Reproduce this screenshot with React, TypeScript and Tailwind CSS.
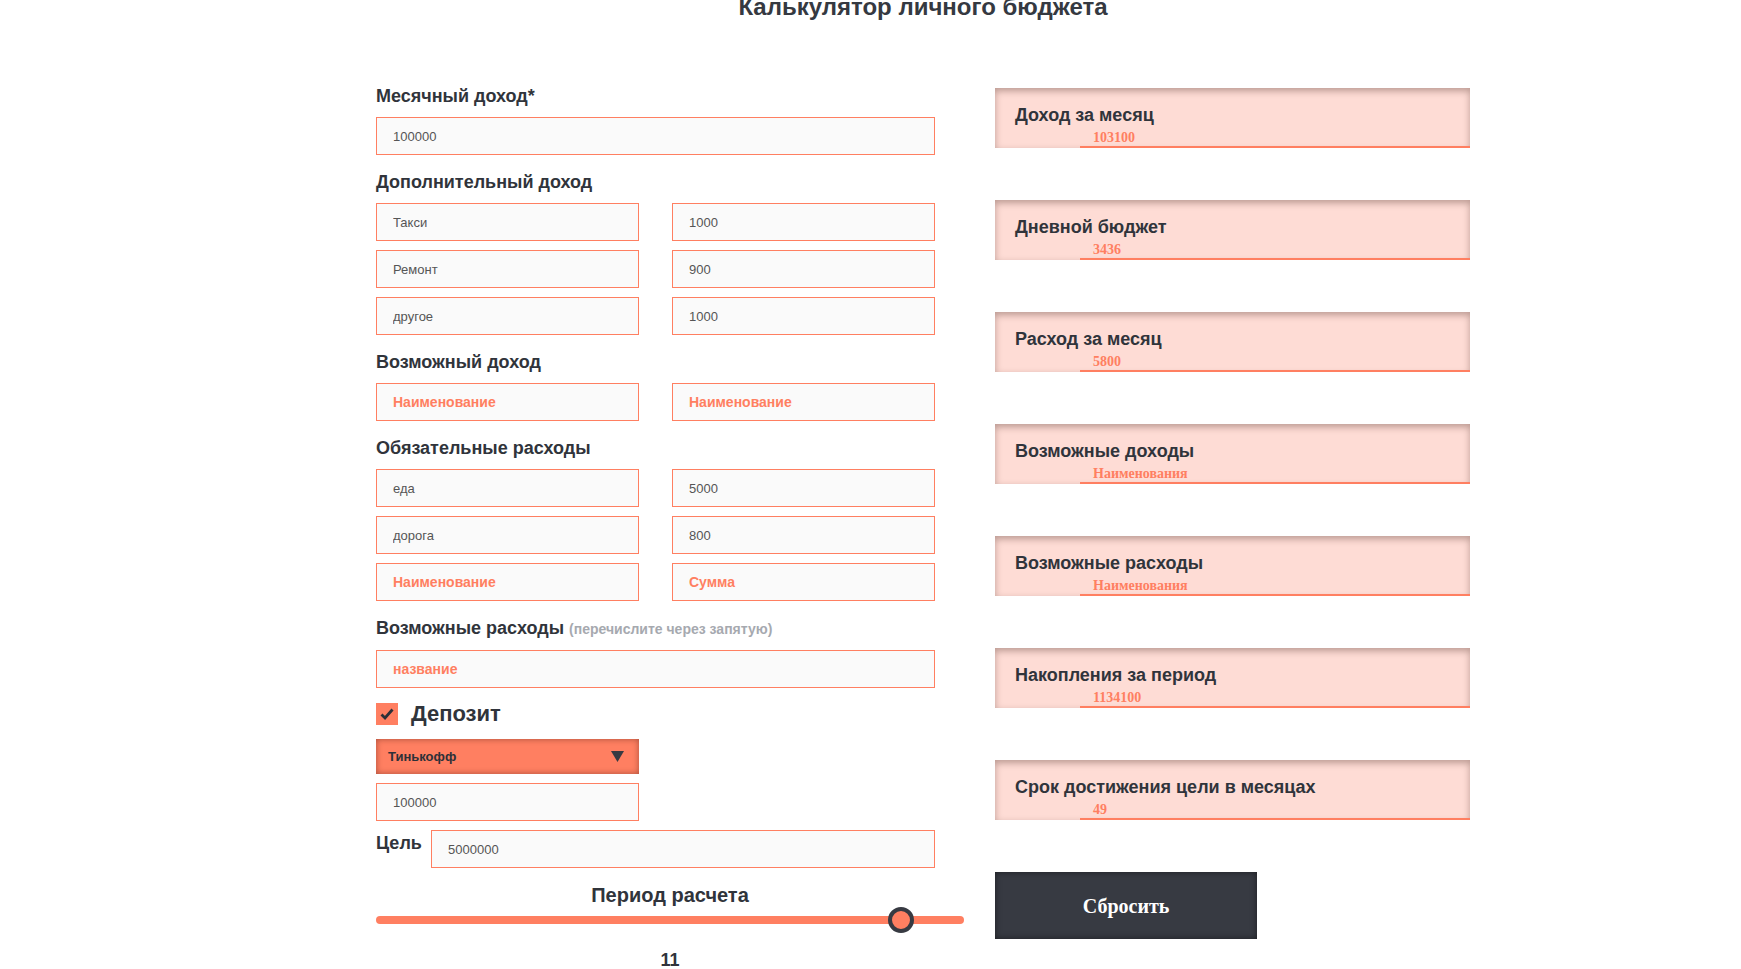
import React from 'react';

const inputCls =
  "block w-full h-[38px] border border-[#ff7f61] bg-[#fafafa] pl-[16px] pr-2 text-[13px] text-[#555] outline-none font-['Liberation_Sans',Arial,sans-serif] placeholder:text-[14px] placeholder:font-bold placeholder:text-[#ff7f61]";

function Field({ value, placeholder }: { value?: string; placeholder?: string }) {
  return <input readOnly className={inputCls} defaultValue={value} placeholder={placeholder} />;
}

function Label({ children, className = '' }: { children: React.ReactNode; className?: string }) {
  return <div className={`text-[18px] font-bold leading-[22px] text-[#30343b] ${className}`}>{children}</div>;
}

function Card({ title, value }: { title: string; value: string }) {
  return (
    <div className="h-[60px] bg-[#fedcd5] pt-[16px] shadow-[inset_0_3px_7px_rgba(60,30,20,0.35)]">
      <div className="pl-[20px] text-[18px] font-bold leading-[22px] text-[#30343b]">{title}</div>
      <div className="ml-[85px] h-[22px] border-b-2 border-[#ff7f61] pl-[13px] pt-[2px] font-['Liberation_Serif','Times_New_Roman',serif] text-[14px] font-bold leading-[20px] text-[#ff7f61]">
        {value}
      </div>
    </div>
  );
}

export default function App() {
  return (
    <div className="h-[969px] overflow-hidden bg-white font-['Liberation_Sans',Arial,sans-serif] text-[#30343b]">
      <div className="ml-[376px] flex w-[1094px] flex-col">
        <h1 className="mt-[-7px] text-center text-[24px] font-bold leading-[28px] text-[#353941]">
          Калькулятор личного бюджета
        </h1>
        <div className="mt-[64px] flex gap-[60px]">
          {/* Form column */}
          <div className="w-[559px] shrink-0">
            <Label>Месячный доход*</Label>
            <div className="mt-[10px]">
              <Field value="100000" />
            </div>

            <Label className="mt-[16px]">Дополнительный доход</Label>
            <div className="mt-[10px] grid grid-cols-2 gap-x-[33px] gap-y-[9px]">
              <Field value="Такси" />
              <Field value="1000" />
              <Field value="Ремонт" />
              <Field value="900" />
              <Field value="другое" />
              <Field value="1000" />
            </div>

            <Label className="mt-[16px]">Возможный доход</Label>
            <div className="mt-[10px] grid grid-cols-2 gap-x-[33px] gap-y-[9px]">
              <Field placeholder="Наименование" />
              <Field placeholder="Наименование" />
            </div>

            <Label className="mt-[16px]">Обязательные расходы</Label>
            <div className="mt-[10px] grid grid-cols-2 gap-x-[33px] gap-y-[9px]">
              <Field value="еда" />
              <Field value="5000" />
              <Field value="дорога" />
              <Field value="800" />
              <Field placeholder="Наименование" />
              <Field placeholder="Сумма" />
            </div>

            <Label className="mt-[16px]">
              Возможные расходы{' '}
              <span className="text-[14px] font-bold text-[#a6a9af]">(перечислите через запятую)</span>
            </Label>
            <div className="mt-[10px]">
              <Field placeholder="название" />
            </div>

            <div className="mt-[15px] flex h-[22px] items-center gap-[13px]">
              <div className="flex h-[22px] w-[22px] items-center justify-center bg-[#ff7f61]">
                <svg width="16" height="16" viewBox="0 0 16 16">
                  <path d="M2.5 8.5 L6 12 L13.5 3.5" fill="none" stroke="#2d3038" strokeWidth="2.8" />
                </svg>
              </div>
              <div className="text-[22px] font-bold leading-[22px] text-[#30343b]">Депозит</div>
            </div>

            <div className="mt-[14px] flex h-[35px] w-[263px] items-center justify-between bg-[#ff7f61] pl-[12px] pr-[15px] shadow-[inset_0_0_6px_rgba(60,20,10,0.45)]">
              <span className="text-[13px] font-bold text-[#2d3038]">Тинькофф</span>
              <svg width="13" height="11" viewBox="0 0 13 11">
                <polygon points="0,0 13,0 6.5,11" fill="#373a42" />
              </svg>
            </div>

            <div className="mt-[9px] w-[263px]">
              <Field value="100000" />
            </div>

            <div className="mt-[9px] flex items-start">
              <div className="w-[55px] shrink-0 pt-[2px] text-[18px] font-bold leading-[22px] text-[#30343b]">Цель</div>
              <div className="flex-1">
                <Field value="5000000" />
              </div>
            </div>

            <div className="w-[588px]">
              <div className="mt-[15px] text-center text-[20px] font-bold leading-[24px] text-[#30343b]">
                Период расчета
              </div>
              <div className="relative h-[26px]">
                <div className="absolute left-0 right-0 top-[9px] h-[8px] rounded-full bg-[#ff7f61]" />
                <div className="absolute left-[512px] top-0 h-[26px] w-[26px] rounded-full border-[4px] border-[#373a42] bg-[#ff7f61]" />
              </div>
              <div className="mt-[18px] text-center text-[18px] font-bold leading-[18px] text-[#30343b]">11</div>
            </div>
          </div>

          {/* Results column */}
          <div className="flex w-[475px] flex-col gap-[52px] pt-[3px]">
            <Card title="Доход за месяц" value="103100" />
            <Card title="Дневной бюджет" value="3436" />
            <Card title="Расход за месяц" value="5800" />
            <Card title="Возможные доходы" value="Наименования" />
            <Card title="Возможные расходы" value="Наименования" />
            <Card title="Накопления за период" value="1134100" />
            <Card title="Срок достижения цели в месяцах" value="49" />
            <button className="h-[67px] w-[262px] bg-[#373a42] font-['Liberation_Serif','Times_New_Roman',serif] text-[20px] font-bold text-white shadow-[inset_0_0_6px_rgba(0,0,0,0.5)]">
              Сбросить
            </button>
          </div>
        </div>
      </div>
    </div>
  );
}
